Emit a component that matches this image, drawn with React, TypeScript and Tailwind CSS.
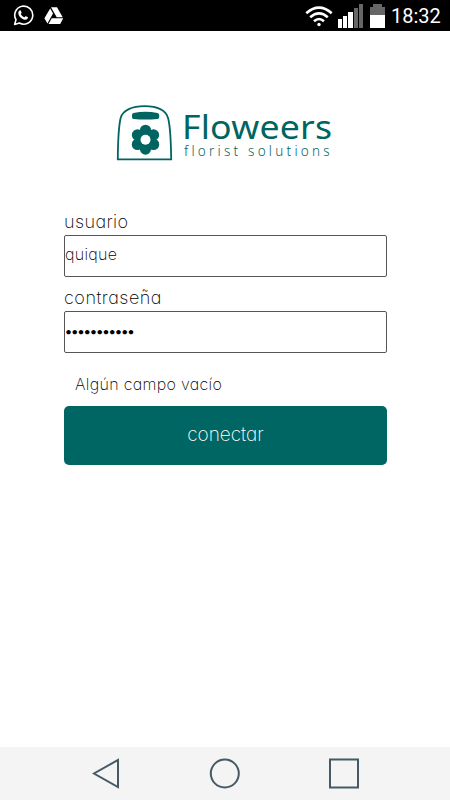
import { useState } from 'react';

function StatusBar() {
  return (
    <header className="flex h-[31px] items-center justify-between bg-black pl-[13px] pr-[9px] text-white">
      <div className="flex items-center gap-[10px]">
        <svg width="21" height="21" viewBox="0 0 21 21" fill="none">
          <path
            d="M1.6 19.4 3 14.7A9 9 0 1 1 6.4 18Z"
            stroke="currentColor"
            strokeWidth="1.6"
            strokeLinejoin="round"
          />
          <path
            d="M6.6 5.600c.5-.4 1-.3 1.200 .2l.8 1.700c.2.6-.6 1-.8 1.400.7 1.600 2 2.700 3.600 3.300.5-.3.9-1.200 1.400-1l1.900.9c.6.4.1 1.500-.5 2-1.500 1.100-3.600.5-5.400-.7-1.700-1.200-3-2.900-3.400-4.500-.3-1.400.2-2.600 1.200-3.300Z"
            fill="currentColor"
          />
        </svg>
        <svg width="20" height="18" viewBox="0 0 20 18" fill="currentColor">
          <path d="M7 .3h6l5.700 10h-6Z" />
          <path d="M6.200 1.400 9 6.400 3.400 16.600.4 11.300Z" />
          <path d="M7.700 11.300h11.500l-3 5.800H4.500Z" />
        </svg>
      </div>
      <div className="flex items-center">
        <svg width="28" height="22" viewBox="0 0 28 22" fill="none" stroke="currentColor" strokeWidth="2.600">
          <path d="M1.300 8.200Q14-2.800 26.700 8.200" />
          <path d="M5.200 12.300Q14 4.600 22.800 12.300" />
          <path d="M9 16.200Q14 11.800 19 16.200" />
          <circle cx="14" cy="19.500" r="1.700" fill="currentColor" stroke="none" />
        </svg>
        <div className="ml-[5px] flex h-6 items-end gap-[1px]">
          <i className="h-[9px] w-[4px] bg-white" />
          <i className="h-[12px] w-[4px] bg-white" />
          <i className="h-[16px] w-[5px] bg-white" />
          <i className="h-[20px] w-[4px] bg-[#666]" />
          <i className="h-[24px] w-[4px] bg-[#666]" />
        </div>
        <div className="ml-[7px] flex h-6 w-[15px] flex-col items-center">
          <i className="h-[3px] w-[9px] bg-[#666]" />
          <i className="h-[8px] w-full bg-[#666]" />
          <i className="h-[13px] w-full bg-white" />
        </div>
        <span className="ml-[6px] w-[50px] whitespace-nowrap font-[Roboto,sans-serif] text-[20px] font-normal leading-none">
          18:32
        </span>
      </div>
    </header>
  );
}

function Logo() {
  return (
    <div className="ml-[116px] mt-[74px] flex h-[56px] text-[#006561]">
      <svg width="57" height="56" viewBox="0 0 57 56" fill="none">
        <path
          d="M1.800 54.300C1.900 41 2 25.500 4.500 13.500 6.300 5 16.800 1.200 28.500 1.200S49.800 5 52.200 13.500C54.700 23.500 55 39.500 55.200 54.300Z"
          stroke="currentColor"
          strokeWidth="1.800"
        />
        <path
          d="M17.500 8Q29.500 5.600 41.500 8Q43.200 8.300 43.200 10V11.900Q43.200 13.800 41.400 14Q29.500 15.200 17.700 14Q16 13.800 16 11.900V10Q16 8.300 17.500 8Z"
          fill="currentColor"
        />
        <g fill="currentColor">
          <circle cx="29.500" cy="25.300" r="5.600" />
          <circle cx="37.500" cy="30" r="5.700" />
          <circle cx="37.500" cy="39.400" r="5.700" />
          <circle cx="29.500" cy="44.100" r="5.600" />
          <circle cx="21.500" cy="39.400" r="5.700" />
          <circle cx="21.500" cy="30" r="5.700" />
          <circle cx="29.500" cy="34.700" r="9.500" />
        </g>
        <circle cx="29.500" cy="34.700" r="5" fill="white" />
      </svg>
      <div className="ml-[9px] w-[160px] font-['Noto_Sans',sans-serif]">
        <h1 className="mt-[5px] origin-left scale-x-[1.08] whitespace-nowrap text-[33px] font-normal leading-[34px] tracking-[0.2px]">
          Floweers
        </h1>
        <p className="ml-[2px] origin-left scale-x-[0.9] whitespace-nowrap text-[15px] font-light leading-[13px] tracking-[3.6px]">
          florist solutions
        </p>
      </div>
    </div>
  );
}

function NavBar() {
  return (
    <nav className="flex h-[53px] items-start justify-between bg-[#f4f4f4] pl-[92px] pr-[91px] pt-[11px] text-[#455a64]">
      <svg width="29" height="31" viewBox="0 0 29 31" fill="none" stroke="currentColor" strokeWidth="2">
        <path d="M26 2v27L2 15.500Z" />
      </svg>
      <svg width="31" height="31" viewBox="0 0 31 31" fill="none" stroke="currentColor" strokeWidth="2">
        <circle cx="15.800" cy="15.500" r="14" />
      </svg>
      <svg width="31" height="31" viewBox="0 0 31 31" fill="none" stroke="currentColor" strokeWidth="2">
        <path d="M2 1.500h28v28h-28Z" />
      </svg>
    </nav>
  );
}

export default function App() {
  const [user, setUser] = useState('quique');
  const [password, setPassword] = useState('floweers123');

  return (
    <div className="flex h-screen flex-col bg-white font-[Inter,sans-serif] font-extralight text-black [font-feature-settings:'cv11']">
      <StatusBar />
      <main className="flex-1">
        <Logo />
        <form className="ml-[64px] mt-[48px] w-[323px]" onSubmit={(e) => e.preventDefault()}>
          <label htmlFor="user" className="block h-[26px] pt-px text-[18px] leading-[24px] tracking-[0.4px]">
            usuario
          </label>
          <input
            id="user"
            type="text"
            value={user}
            onChange={(e) => setUser(e.target.value)}
            className="block h-[42px] w-full rounded-[2px] border border-[#555] pb-[4px] text-[16px] tracking-[0.3px] outline-none"
          />
          <label htmlFor="password" className="block h-[34px] pt-[9px] text-[18px] leading-[24px] tracking-[0.5px]">
            contraseña
          </label>
          <input
            id="password"
            type="password"
            value={password}
            onChange={(e) => setPassword(e.target.value)}
            className="block h-[42px] w-full rounded-[2px] border border-[#555] pb-[2px] font-[Lato,sans-serif] text-[12px] font-normal tracking-[-0.7px] outline-none"
          />
          <p className="ml-[11px] mt-[20px] h-[33px] whitespace-nowrap text-[16px] leading-[22px] tracking-[0.3px]">
            Algún campo vacío
          </p>
          <button
            type="submit"
            className="block h-[59px] w-full rounded-[5px] bg-[#006664] text-[19px] font-extralight text-white"
          >
            conectar
          </button>
        </form>
      </main>
      <NavBar />
    </div>
  );
}
